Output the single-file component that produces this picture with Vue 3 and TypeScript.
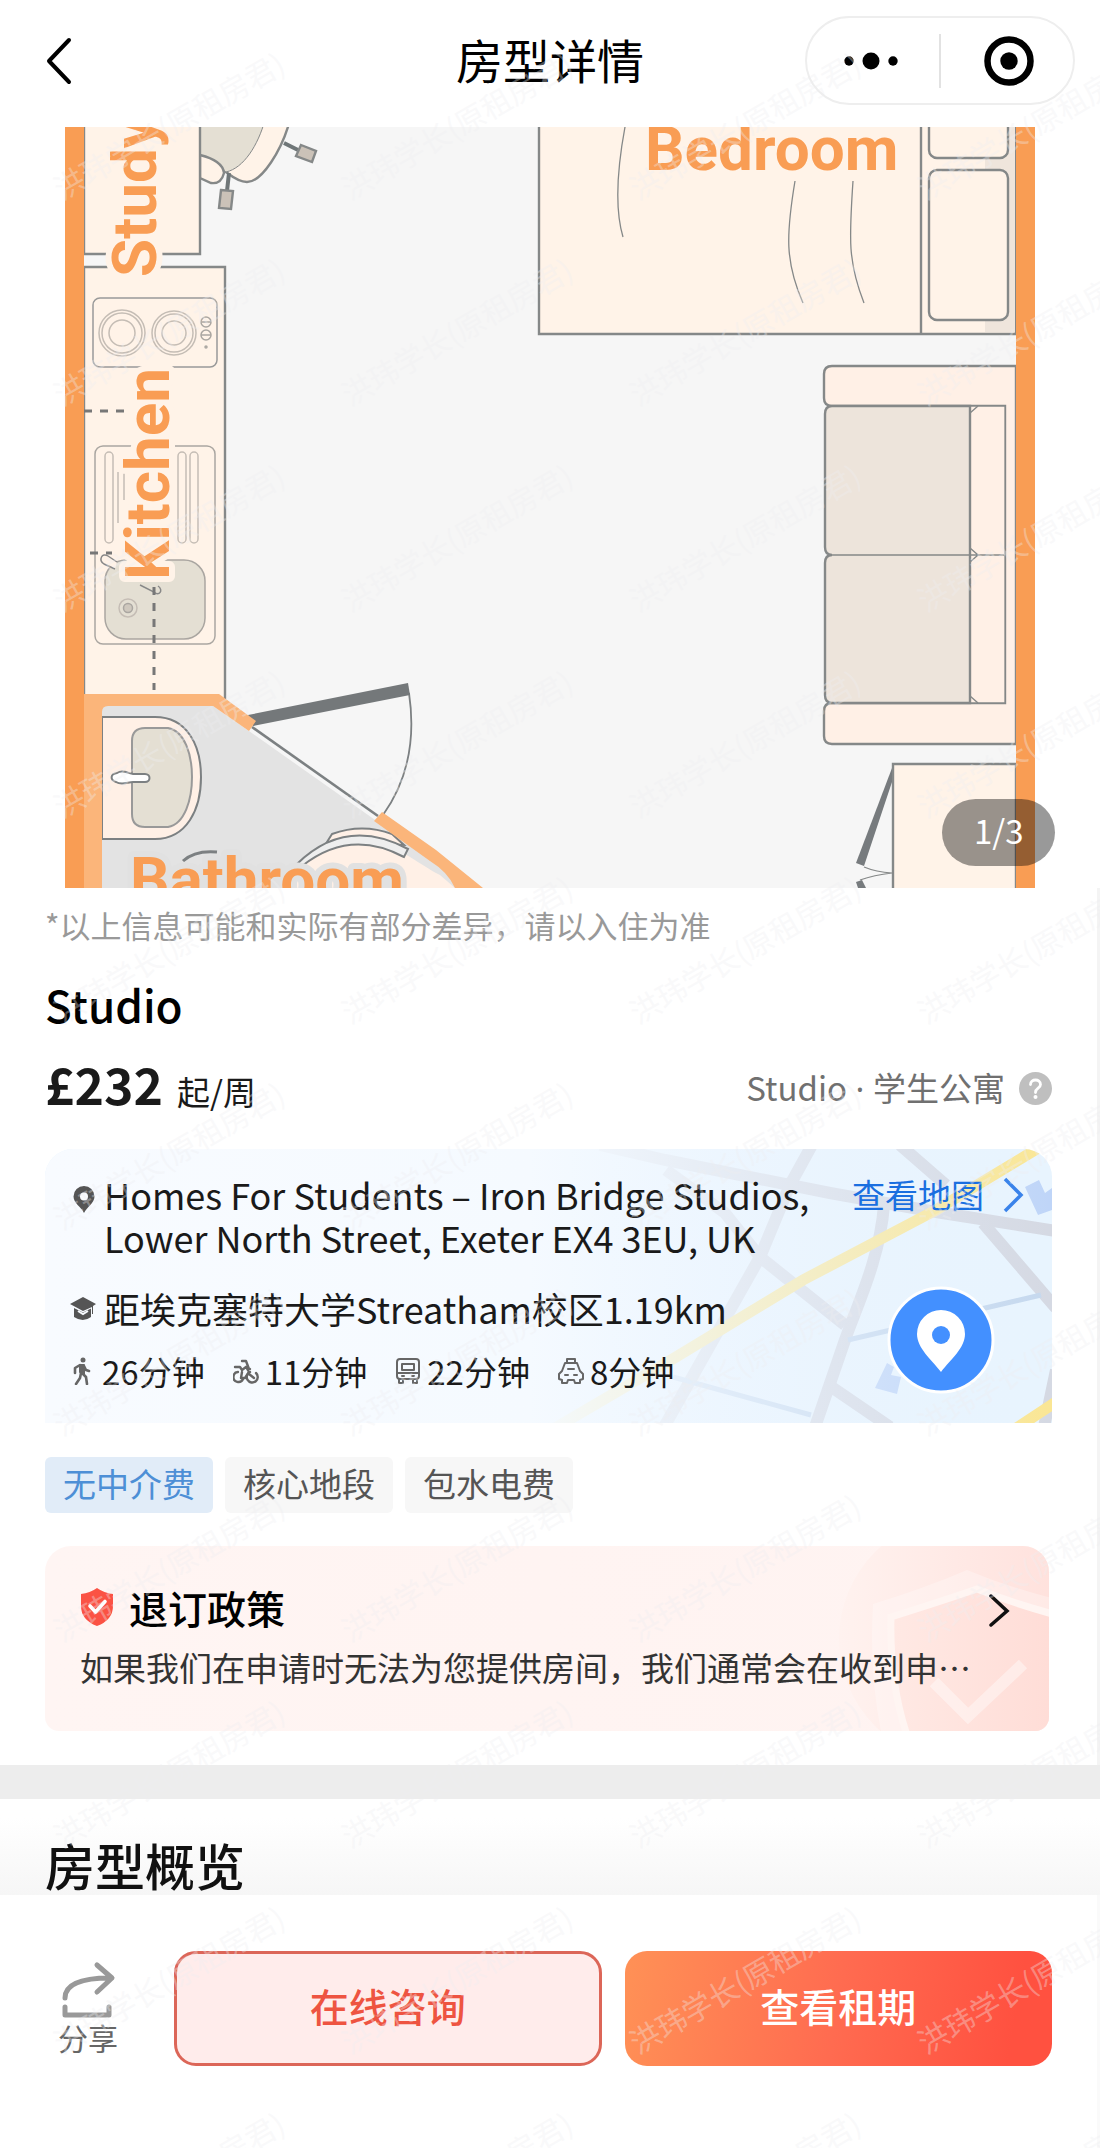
<script setup lang="ts">
interface TravelTime {
  mode: 'walk' | 'bike' | 'bus' | 'taxi'
  label: string
}

const travel: TravelTime[] = [
  { mode: 'walk', label: '26分钟' },
  { mode: 'bike', label: '11分钟' },
  { mode: 'bus', label: '22分钟' },
  { mode: 'taxi', label: '8分钟' },
]

const tags: { text: string; active: boolean }[] = [
  { text: '无中介费', active: true },
  { text: '核心地段', active: false },
  { text: '包水电费', active: false },
]

const watermark = '洪玮学长(原租房君)'
const columns = 4
const rows = 11
const stamps = Array.from({ length: columns * rows }, (_, i) => ({
  x: 62 + (i % columns) * 288,
  y: 201 + Math.floor(i / columns) * 206,
}))
</script>

<template>
  <div class="page">
    <header class="nav">
      <button class="back" type="button" aria-label="返回">
        <svg width="28" height="52" viewBox="0 0 28 52" fill="none" stroke="#000" stroke-width="4" stroke-linecap="round" stroke-linejoin="round"><path d="M24 5 4 26l20 21" /></svg>
      </button>
      <h1>房型详情</h1>
      <div class="capsule">
        <button type="button" aria-label="更多">
          <svg width="56" height="56" viewBox="0 0 56 56"><circle cx="6" cy="28" r="4.7" /><circle cx="28" cy="28" r="8.5" /><circle cx="50" cy="28" r="4.7" /></svg>
        </button>
        <i></i>
        <button type="button" aria-label="关闭">
          <svg width="56" height="56" viewBox="0 0 56 56"><circle cx="28" cy="28" r="21.5" fill="none" stroke="#000" stroke-width="6.5" /><circle cx="28" cy="28" r="8.7" /></svg>
        </button>
      </div>
    </header>

    <section class="gallery">
      <svg class="plan" viewBox="65 127 970 761" role="img" aria-label="户型图">
        <rect x="65" y="127" width="970" height="761" fill="#f6f6f6" />
        <g stroke="#858888" stroke-width="2.4" fill="#fff3e8">
          <!-- desk chair -->
          <path d="M290 120C282 150 262 182 247 182 238 182 230 175 226 172L200 150V120Z" />
          <path d="M265 120C258 145 244 168 226 172L200 156V120Z" fill="#e4dfd3" stroke-width="1" />
          <path d="M200 155C212 158 223 163 224 173 222 181 218 184 211 183L200 178Z" />
          <path d="M229 173l-2 18M284 143l14 7" stroke="#6f7678" stroke-width="4" />
          <path d="M221 190l12 1-2 18-12-1zM301 145l15 6-4 11-16-6z" fill="#cbc2b8" />
          <path d="M84 110H200V254H84Z" />
          <path d="M84 267H225V700H84Z" />
          <!-- bed -->
          <path d="M539 110H1016V334H539Z" />
          <path d="M985 127H1015V332H985Z" fill="#efe5dc" stroke="none" />
          <path d="M921 127V333" />
          <rect x="929" y="90" width="79" height="68" rx="8" />
          <rect x="929" y="170" width="79" height="150" rx="8" />
          <path d="M625 127C617 170 615 210 623 237M795 181C786 235 785 262 803 303M853 181C849 240 848 262 864 303" fill="none" stroke-width="1.3" />
          <!-- sofa -->
          <path d="M1016 366H832Q824 366 824 374V398Q824 406 832 406H1005V703H832Q824 703 824 711V736Q824 744 832 744H1016Z" fill="#fff0e6" />
          <path d="M1005 406H970V703H1005Z" fill="#fff0e6" stroke-width="1.3" />
          <path d="M970 406H832Q825 406 825 414V547Q825 555 832 555 825 555 825 563V695Q825 703 832 703H970Z" fill="#ede4db" />
          <path d="M830 555H1004M970 413 978 406M970 548 978 555 970 562M970 696 978 703" fill="none" stroke-width="1.4" />
          <!-- wardrobe -->
          <path d="M893 900V764H1016V900Z" />
          <path d="M892 768V782L864 866 856 863Z" fill="#777b7e" stroke="none" />
          <path d="M864 867Q876 872 892 873 874 875 860 880" fill="none" stroke-width="1.2" />
          <path d="M856 882 862 880 866 888H858Z" fill="#777b7e" stroke="none" />
        </g>
        <!-- hob and sink -->
        <g stroke="#aaa6a1" stroke-width="1.5" fill="none">
          <rect x="93" y="298" width="124" height="69" rx="7" stroke="#999" />
          <g stroke="#c5bdb5"><circle cx="122" cy="333" r="23" /><circle cx="122" cy="333" r="20" /><circle cx="122" cy="333" r="13" /><circle cx="174" cy="333" r="22" /><circle cx="174" cy="333" r="19" /><circle cx="174" cy="333" r="12" /></g>
          <circle cx="206" cy="322" r="5" /><circle cx="206" cy="335" r="5" /><path d="M201 322h10M201 335h10" /><circle cx="206" cy="347" r="1" />
          <rect x="95" y="446" width="120" height="198" rx="8" />
          <g stroke="#c5bdb5"><rect x="105" y="452" width="8" height="91" rx="4" /><rect x="178" y="452" width="8" height="91" rx="4" /><rect x="190" y="452" width="8" height="91" rx="4" /><path d="M118 472V523M124 472V500" /></g>
          <rect x="105" y="560" width="100" height="79" rx="21" fill="#e4dfd3" />
          <circle cx="128" cy="608" r="9" stroke="#c5bdb5" /><circle cx="128" cy="608" r="4.5" fill="#cfc8be" />
          <path d="M115 569 104 564C98 560 102 552 108 556L117 562" fill="#fff3e8" stroke="#888" />
          <path d="M140 585 154 592C159 597 164 590 158 586" stroke="#888" />
          <g stroke="#777" stroke-width="3"><path d="M84 411H128M90 553H112" stroke-dasharray="8 8" /><path d="M154 587V690" stroke-dasharray="8 8" /></g>
        </g>
        <!-- bathroom -->
        <path d="M102 706H213L249 731 378 822 470 888H102Z" fill="#e3e3e3" />
        <path d="M286 888C310 848 335 840 365 840 390 840 420 865 440 875L455 888Z" fill="#fff0e6" />
        <g stroke="#7c8082" stroke-width="2" fill="none">
          <path d="M102 717H155C187 717 201 745 201 777S187 839 155 839H102Z" fill="#fff0e6" />
          <path d="M145 728H168C185 731 192 755 192 777S185 824 168 827H145Q132 827 132 814V741Q132 728 145 728Z" fill="#e4dfd3" stroke="#999" />
          <path d="M117 773C123 769 129 774 133 774H145C151 774 151 782 145 782H133C128 782 122 786 116 782 110 780 110 774 117 773Z" fill="#fff" />
          <path d="M327 842 332 834Q362 823 392 834L404 845Z" fill="#fff0e6" />
          <path d="M297 864Q346 816 408 849L404 857Q350 828 302 866" fill="#eee" />
          <path d="M183 861Q195 850 217 852" stroke-width="3" />
          <path d="M252 727 378 816" stroke-width="2.6" />
          <path d="M409 693C416 740 408 780 383 815" stroke-width="1.8" />
        </g>
        <path d="M248 715 408 683 410 695 253 726Z" fill="#74787a" />
        <g fill="#fbb57a">
          <path d="M84 694H219L256 721 249 731 213 706H108Q102 706 102 712V888H84Z" />
          <path d="M382 812 436 850 483 888H455Q448 872 430 861L374 821Z" />
        </g>
        <path d="M65 127H84V888H65ZM1016 127H1035V888H1016Z" fill="#f99d54" />
        <g class="room">
          <text transform="translate(156 277) rotate(-90)">Study</text>
          <text transform="translate(169 580) rotate(-90)">Kitchen</text>
          <text x="645" y="170">Bedroom</text>
          <text x="130" y="901" class="on-grey">Bathroom</text>
        </g>
      </svg>
      <span class="counter">1/3</span>
    </section>

    <main class="info">
      <p class="note">*以上信息可能和实际有部分差异，请以入住为准</p>
      <h2 class="name">Studio</h2>
      <div class="price-row">
        <p class="price"><strong>£232</strong><span>起/周</span></p>
        <p class="kind">
          <span>Studio<span class="dot"> · </span>学生公寓</span>
          <svg width="33" height="33" viewBox="0 0 33 33"><circle cx="16.5" cy="16.5" r="16.5" fill="#bfbfbf" /><path d="M11.5 12.5c0-6 10-6 10 0 0 4-5 3.5-5 8" fill="none" stroke="#fff" stroke-width="2.8" stroke-linecap="round" /><circle cx="16.5" cy="25" r="2" fill="#fff" /></svg>
        </p>
      </div>

      <section class="location">
        <svg class="map" viewBox="45 1149 1007 274" preserveAspectRatio="xMaxYMid slice" aria-hidden="true">
          <defs>
            <linearGradient id="map-fade" x1="0" x2="1"><stop offset="0" stop-color="#f8fbff" /><stop offset=".48" stop-color="#f5faff" /><stop offset=".8" stop-color="#ecf5ff" stop-opacity=".4" /><stop offset="1" stop-color="#e8f4ff" stop-opacity="0" /></linearGradient>
          </defs>
          <rect x="45" y="1149" width="1007" height="274" fill="#e8f4fe" />
          <g fill="none" stroke="#d5d9e3" stroke-width="12">
            <path d="M600 1145 665 1160 830 1193 936 1212 1056 1231" />
            <path d="M812 1145 790 1185M666 1170 725 1213 760 1257 845 1325" />
            <path d="M792 1180 760 1257 664 1427M884 1205C880 1260 855 1310 845 1340L815 1427" />
            <path d="M900 1145 946 1185M983 1223 1056 1308M830 1386 890 1427M1056 1370 1044 1427" />
          </g>
          <path d="M848 1340 1041 1295M673 1377 811 1415" fill="none" stroke="#c5d8ee" stroke-width="5" />
          <path d="M1050 1141 936 1210 803 1280 676 1357 550 1431M1056 1402 1015 1429" fill="none" stroke="#fae694" stroke-width="11" />
          <path d="M1025 1187 1039 1180 1045 1193 1052 1188V1210L1038 1215ZM887 1363 894 1367 891 1375 901 1377 897 1394 875 1388Z" fill="#bfd5f8" />
          <rect x="45" y="1149" width="1007" height="274" fill="url(#map-fade)" />
          <circle cx="941" cy="1340" r="52" fill="#4390ff" stroke="#fff" stroke-width="3" />
          <path d="M941 1372C931 1359 917 1348 917 1334A24 24 0 0 1 965 1334C965 1348 951 1359 941 1372Z" fill="#fff" /><circle cx="941" cy="1335" r="9" fill="#4390ff" />
        </svg>
        <div class="address">
          <svg class="glyph" viewBox="0 0 26 28"><path d="M14 0a10.5 10.5 0 0 1 10.5 10.5C24.5 17 17 21 14 27 11 21 3.5 17 3.5 10.5A10.5 10.5 0 0 1 14 0Zm0 6.5a4 4 0 1 0 0 8 4 4 0 0 0 0-8Z" fill="#555" fill-rule="evenodd" /></svg>
          <p>Homes For Students – Iron Bridge Studios,<br />Lower North Street, Exeter EX4 3EU, UK</p>
          <a href="#map">查看地图
            <svg width="22" height="38" viewBox="0 0 22 38" fill="none" stroke="#3a83ea" stroke-width="3.5"><path d="M3 3 19 19 3 35" /></svg>
          </a>
        </div>
        <div class="campus">
          <svg class="glyph" viewBox="0 0 26 28"><path d="M13 3 26 10 23 12V20H22V13L13 17 0 10Z" fill="#555" /><path d="M4 14 13 18.5 21 14.5V23Q13 29 4 23Z" fill="#555" /><path d="M8 17 13 20 18 17" fill="none" stroke="#f8fbff" stroke-width="2" /></svg>
          <span>距埃克塞特大学Streatham校区1.19km</span>
        </div>
        <ul class="travel">
          <li v-for="item in travel" :key="item.mode">
            <svg class="glyph" viewBox="0 0 26 28" fill="none" stroke="#666" stroke-width="2" stroke-linecap="round" stroke-linejoin="round">
              <template v-if="item.mode === 'walk'"><circle cx="13" cy="3" r="2.5" fill="#666" stroke="none" /><path d="M10 8 14 8 14 17 10 15Z" fill="#666" /><path d="M10 8 5 11V16M14 9 16 13 19 14M11 16 10 21 6 27M13 17 16 20 17 27" stroke-width="2.6" /></template>
              <template v-else-if="item.mode === 'bike'"><path d="M5 15A5 5 0 1 0 10 22M17 15A5.5 5.5 0 1 0 23 16" stroke-width="2.4" /><path d="M2 10H7L9 13 13 10 16 15 12 21H8L9 15M13 10 17 12M16 17 21 21M9 4H13L16 12" stroke-width="2.4" /></template>
              <template v-else-if="item.mode === 'bus'"><rect x="2" y="2" width="22" height="20" rx="3" /><path d="M7 7H19V13H7ZM2 16H24M7 19H9M17 19H19M4 22V26H8V23M22 22V26H18V23" /></template>
              <template v-else><path d="M9 6V2H17V6M7 6H19L22 14 25 17V22L22 23V26H17L16 23H10L9 26H4V23L1 22V17L4 14ZM10 12H16M7 18H10M16 18H19" /></template>
            </svg>
            <span>{{ item.label }}</span>
          </li>
        </ul>
      </section>

      <ul class="tags">
        <li v-for="tag in tags" :key="tag.text" :class="{ active: tag.active }">{{ tag.text }}</li>
      </ul>

      <section class="policy">
        <svg class="crest" viewBox="839 1546 210 185" preserveAspectRatio="xMaxYMid slice" aria-hidden="true">
          <defs>
            <linearGradient id="crest-disc" x1="0" x2="1"><stop offset="0" stop-color="#fff2ef" /><stop offset="1" stop-color="#ffdfda" /></linearGradient>
            <linearGradient id="crest-fill" x1="0" x2="1"><stop offset="0" stop-color="#ffe9e4" /><stop offset="1" stop-color="#ffdcd6" /></linearGradient>
          </defs>
          <circle cx="962" cy="1639" r="123" fill="url(#crest-disc)" />
          <path d="M873 1604Q925 1588 967 1570 1010 1588 1060 1600V1760H888Q868 1690 873 1604Z" fill="#fff" opacity=".28" />
          <path d="M891 1617Q945 1600 977 1589 1015 1604 1060 1616V1760H917Q889 1700 891 1617Z" fill="url(#crest-fill)" stroke="#fff5f2" stroke-width="7" />
          <path d="M934 1682 968 1716 1023 1664" fill="none" stroke="#fff" stroke-opacity=".4" stroke-width="12" />
        </svg>
        <div class="policy-head">
          <svg width="34" height="38" viewBox="0 0 34 38"><path d="M17 0Q24 5 33 6V18Q33 32 17 38 1 32 1 18V6Q10 5 17 0Z" fill="#fb5244" /><path d="M10 18 15.5 24 25 13.5" fill="none" stroke="#fff" stroke-width="3.6" stroke-linecap="round" stroke-linejoin="round" /></svg>
          <h3>退订政策</h3>
          <button type="button" aria-label="查看退订政策">
            <svg width="22" height="40" viewBox="0 0 22 40" fill="none" stroke="#111" stroke-width="3.5" stroke-linecap="round"><path d="M2 9 18 24 2 38" /></svg>
          </button>
        </div>
        <p>如果我们在申请时无法为您提供房间，我们通常会在收到申请后退款</p>
      </section>
    </main>

    <div class="divider"></div>
    <section class="overview"><h2>房型概览</h2></section>

    <footer class="actions">
      <button class="share" type="button">
        <svg width="56" height="58" viewBox="0 0 56 58" fill="none" stroke="#999" stroke-width="5" stroke-linecap="round" stroke-linejoin="round"><path d="M5 37C5 24 20 17 50 17M37 4 52 17 37 31" /><path d="M5 46V54H49V46" /></svg>
        <span>分享</span>
      </button>
      <button class="consult" type="button">在线咨询</button>
      <button class="lease" type="button">查看租期</button>
    </footer>

    <svg class="watermark" aria-hidden="true">
      <text v-for="(s, i) in stamps" :key="i" :transform="`translate(${s.x} ${s.y}) rotate(-30)`">{{ watermark }}</text>
    </svg>
  </div>
</template>

<style>
body {
  margin: 0;
  background: #fff;
}
</style>

<style scoped>
.page {
  position: relative;
  overflow: hidden;
  background: #fff;
  color: #1a1a1a;
  font-family: "Noto Sans CJK SC", "Noto Sans", sans-serif;
  font-size: 33px;
}
h1, h2, h3, p, ul {
  margin: 0;
  padding: 0;
  list-style: none;
}
button {
  padding: 0;
  border: 0;
  background: none;
  color: inherit;
  font: inherit;
}
svg {
  display: block;
  flex: none;
}
.nav {
  display: grid;
  grid-template-columns: 1fr auto 1fr;
  align-items: center;
  padding: 16px 25px 22px;
}
.nav h1 {
  padding-bottom: 4px;
  color: #000;
  font-size: 47px;
  font-weight: 400;
  line-height: 60px;
}
.back {
  justify-self: start;
  margin-left: 20px;
}
.capsule {
  justify-self: end;
  display: flex;
  align-items: center;
  justify-content: space-between;
  box-sizing: border-box;
  width: 270px;
  height: 89px;
  padding: 0 36px;
  border: 2px solid #eee;
  border-radius: 45px;
}
.capsule i {
  width: 2px;
  height: 54px;
  background: #e2e2e2;
}
.gallery {
  position: relative;
}
.plan {
  width: calc(100% - 130px);
  margin: 0 65px;
}
.room text {
  fill: #f99d54;
  stroke: #fff3e8;
  stroke-width: 12px;
  stroke-linejoin: round;
  paint-order: stroke;
  font-family: Roboto, sans-serif;
  font-size: 62px;
  font-weight: 700;
}
.room .on-grey {
  stroke: #e1e1e1;
}
.counter {
  position: absolute;
  right: 45px;
  bottom: 22px;
  box-sizing: border-box;
  width: 113px;
  height: 67px;
  padding-left: 32px;
  border-radius: 34px;
  background: rgba(0, 0, 0, 0.4);
  color: #fff;
  font-size: 33px;
  line-height: 62px;
}
.info {
  padding: 14px 45px 34px;
  border-right: 3px solid #f4f4f4;
}
.note {
  color: #999;
  font-size: 31px;
  line-height: 46px;
}
.name {
  margin-top: 26px;
  color: #000;
  font-size: 44px;
  font-weight: 500;
  line-height: 60px;
}
.price-row {
  display: flex;
  align-items: center;
  justify-content: space-between;
  margin-top: 17px;
}
.price {
  display: flex;
  align-items: baseline;
  gap: 14px;
  line-height: 40px;
}
.price strong {
  font-size: 50px;
  font-weight: 700;
  line-height: 64px;
}
.kind {
  display: flex;
  align-items: center;
  gap: 14px;
  padding-top: 10px;
  color: #707070;
  line-height: 40px;
}
.dot {
  font-family: "Noto Sans", sans-serif;
}
.location {
  position: relative;
  overflow: hidden;
  margin-top: 34px;
  padding: 24px 28px 32px 25px;
  border-radius: 28px 28px 0 0;
}
.map {
  position: absolute;
  inset: 0;
  width: 100%;
  height: 100%;
}
.address,
.campus,
.travel {
  position: relative;
  display: flex;
}
.glyph {
  width: 26px;
  height: 28px;
}
.address {
  gap: 8px;
  font-size: 36px;
  line-height: 43px;
}
.address .glyph {
  margin-top: 13px;
}
.address a {
  display: flex;
  align-items: center;
  gap: 18px;
  height: 43px;
  margin-left: auto;
  color: #1a6fe0;
  font-size: 33px;
  text-decoration: none;
}
.campus {
  align-items: center;
  gap: 8px;
  margin-top: 27px;
  font-size: 36px;
  line-height: 44px;
}
.travel {
  gap: 28px;
  margin-top: 21px;
  line-height: 40px;
}
.travel li {
  display: flex;
  align-items: center;
  gap: 6px;
}
.tags {
  display: flex;
  gap: 12px;
  margin-top: 34px;
}
.tags li {
  height: 56px;
  padding: 0 18px;
  border-radius: 6px;
  background: #f7f7f7;
  color: #555;
  line-height: 52px;
}
.tags .active {
  background: #e1ecf8;
  color: #4d8fd6;
}
.policy {
  position: relative;
  overflow: hidden;
  margin: 33px 3px 0 0;
  padding: 37px 38px 41px 35px;
  border-radius: 26px 26px 14px 14px;
  background: linear-gradient(90deg, #fff5f3, #fff3f1);
}
.crest {
  position: absolute;
  top: 0;
  right: 0;
  height: 100%;
}
.policy-head {
  position: relative;
  display: flex;
  align-items: center;
  gap: 15px;
}
.policy h3 {
  color: #000;
  font-size: 39px;
  font-weight: 500;
  line-height: 48px;
}
.policy-head button {
  margin-left: auto;
}
.policy p {
  position: relative;
  overflow: hidden;
  margin: 13px 20px 0 0;
  color: #333;
  line-height: 46px;
  text-overflow: ellipsis;
  white-space: nowrap;
}
.divider {
  height: 34px;
  background: #ededed;
}
.overview {
  padding: 38px 45px 4px;
  background: linear-gradient(#fff 20%, #f6f6f6);
}
.overview h2 {
  color: #111;
  font-size: 50px;
  font-weight: 500;
  line-height: 54px;
}
.actions {
  display: grid;
  grid-template-columns: 106px 1fr 1fr;
  gap: 23px;
  padding: 56px 45px 82px;
  border-right: 3px solid #fafafa;
}
.actions button {
  height: 115px;
  padding-bottom: 8px;
  border-radius: 22px;
  font-size: 39px;
  font-weight: 500;
}
.actions .share {
  display: flex;
  flex-direction: column;
  align-items: center;
  padding: 10px 20px 0 0;
  color: #666;
  font-size: 30px;
  font-weight: 400;
  line-height: 36px;
}
.actions .consult {
  border: 3px solid #dc6658;
  background: #ffeceb;
  color: #ee5441;
}
.actions .lease {
  background: linear-gradient(100deg, #ff9156, #ff6b50 50%, #ff5140 90%);
  color: #fff;
}
.watermark {
  position: absolute;
  inset: 0;
  width: 100%;
  height: 100%;
  pointer-events: none;
}
.watermark text {
  fill: rgba(238, 238, 241, 0.36);
  font-size: 30px;
}
</style>
